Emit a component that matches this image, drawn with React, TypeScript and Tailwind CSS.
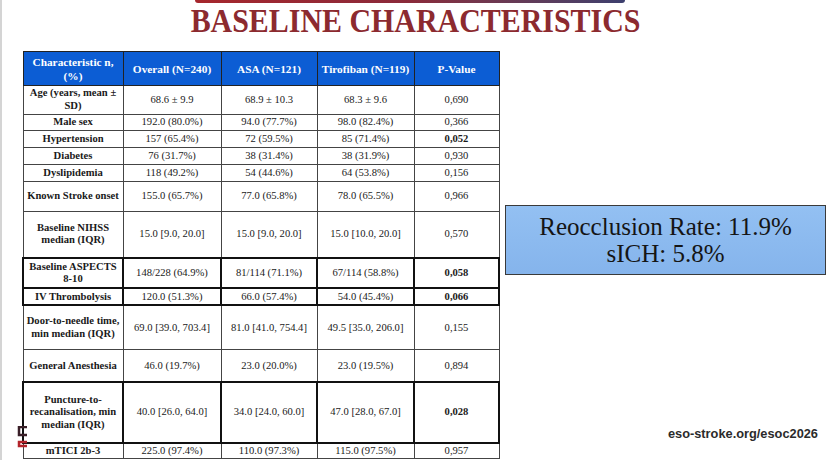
type Row = {
  label: string[];
  overall: string;
  asa: string;
  tiro: string;
  p: string;
  h: string;
  thick?: boolean;
  boldP?: boolean;
};

const rows: Row[] = [
  { label: ["Age (years, mean ±", "SD)"], overall: "68.6 ± 9.9", asa: "68.9 ± 10.3", tiro: "68.3 ± 9.6", p: "0,690", h: "h-[27px]" },
  { label: ["Male sex"], overall: "192.0 (80.0%)", asa: "94.0 (77.7%)", tiro: "98.0 (82.4%)", p: "0,366", h: "h-[16px]" },
  { label: ["Hypertension"], overall: "157 (65.4%)", asa: "72 (59.5%)", tiro: "85 (71.4%)", p: "0,052", h: "h-[16px]", boldP: true },
  { label: ["Diabetes"], overall: "76 (31.7%)", asa: "38 (31.4%)", tiro: "38 (31.9%)", p: "0,930", h: "h-[16px]" },
  { label: ["Dyslipidemia"], overall: "118 (49.2%)", asa: "54 (44.6%)", tiro: "64 (53.8%)", p: "0,156", h: "h-[16px]" },
  { label: ["Known Stroke onset"], overall: "155.0 (65.7%)", asa: "77.0 (65.8%)", tiro: "78.0 (65.5%)", p: "0,966", h: "h-[28px]" },
  { label: ["Baseline NIHSS", "median (IQR)"], overall: "15.0 [9.0, 20.0]", asa: "15.0 [9.0, 20.0]", tiro: "15.0 [10.0, 20.0]", p: "0,570", h: "h-[44px]" },
  { label: ["Baseline ASPECTS", "8-10"], overall: "148/228 (64.9%)", asa: "81/114 (71.1%)", tiro: "67/114 (58.8%)", p: "0,058", h: "h-[29px]", thick: true, boldP: true },
  { label: ["IV Thrombolysis"], overall: "120.0 (51.3%)", asa: "66.0 (57.4%)", tiro: "54.0 (45.4%)", p: "0,066", h: "h-[16px]", thick: true, boldP: true },
  { label: ["Door-to-needle time,", "min median (IQR)"], overall: "69.0 [39.0, 703.4]", asa: "81.0 [41.0, 754.4]", tiro: "49.5 [35.0, 206.0]", p: "0,155", h: "h-[42px]" },
  { label: ["General Anesthesia"], overall: "46.0 (19.7%)", asa: "23.0 (20.0%)", tiro: "23.0 (19.5%)", p: "0,894", h: "h-[31px]" },
  { label: ["Puncture-to-", "recanalisation, min", "median (IQR)"], overall: "40.0 [26.0, 64.0]", asa: "34.0 [24.0, 60.0]", tiro: "47.0 [28.0, 67.0]", p: "0,028", h: "h-[57px]", thick: true, boldP: true },
  { label: ["mTICI 2b-3"], overall: "225.0 (97.4%)", asa: "110.0 (97.3%)", tiro: "115.0 (97.5%)", p: "0,957", h: "h-[15px]" },
];

const serif = "font-['Liberation_Serif','Times_New_Roman',serif]";

export default function App() {
  return (
    <div className={`relative w-[830px] h-[460px] overflow-hidden bg-white border-l-2 border-[#d4d4d4] ${serif}`}>
      {/* cut-off logo on the slide edge */}
      <svg className="absolute left-[14px] top-[426px]" width="14" height="22" viewBox="0 0 14 22">
        <path d="M11 1 H3 V9 H11" fill="none" stroke="#3a1f28" strokeWidth="2.5" />
        <path d="M11 16 H3 V20 H11" fill="none" stroke="#b3242b" strokeWidth="2.5" />
      </svg>

      <div className="flex justify-center">
        <div className="ml-[-12px] w-[430px] h-[3px] rounded-b-full bg-gradient-to-r from-[#a6262c] via-[#8a2a3a] to-[#3c3f6e]" />
      </div>

      <h1 className="mt-[-2px] h-[40px] flex justify-center text-[34px] leading-[40px] font-bold text-[#8c2a2f]">
        <span className="inline-block scale-x-[0.88]">BASELINE CHARACTERISTICS</span>
      </h1>

      <div className="flex mt-[10px] h-[408px]">
        <table className={`ml-[20px] border-collapse table-fixed w-[476px] text-center text-[10.6px] leading-[12px] text-[#1a1a1a] ${serif}`}>
          <colgroup>
            <col className="w-[100px]" />
            <col className="w-[98px]" />
            <col className="w-[96px]" />
            <col className="w-[97px]" />
            <col className="w-[85px]" />
          </colgroup>
          <thead>
            <tr className={`h-[34px] bg-[#0c5dd4] text-white font-bold text-[11.3px] leading-[14px] ${serif}`}>
              <th className="border border-[#222] px-0">Characteristic n,<br />(%)</th>
              <th className="border border-[#222] px-0 whitespace-nowrap">Overall (N=240)</th>
              <th className="border border-[#222] px-0 whitespace-nowrap">ASA (N=121)</th>
              <th className="border border-[#222] px-0 whitespace-nowrap">Tirofiban (N=119)</th>
              <th className="border border-[#222] px-0">P-Value</th>
            </tr>
          </thead>
          <tbody className={serif}>
            {rows.map((r) => {
              const b = r.thick ? "border-2 border-[#111]" : "border border-[#444]";
              return (
                <tr key={r.label.join(" ")} className={r.h}>
                  <td className={`${b} px-0.5 py-0 font-bold text-[10.6px] leading-[12.5px]`}>
                    {r.label.map((l, i) => (
                      <div key={i}>{l}</div>
                    ))}
                  </td>
                  <td className={`${b} px-1 py-0`}>{r.overall}</td>
                  <td className={`${b} px-1 py-0`}>{r.asa}</td>
                  <td className={`${b} px-1 py-0`}>{r.tiro}</td>
                  <td className={`${b} px-1 py-0 ${r.boldP ? "font-bold" : ""}`}>{r.p}</td>
                </tr>
              );
            })}
          </tbody>
        </table>

        <div className="flex flex-col flex-1 ml-[5px] mr-[5px]">
          <div className="mt-[154px] h-[70px] w-[321px] border border-[#3a3a3a] bg-gradient-to-b from-[#93c0f2] to-[#85b4ec] flex flex-col items-center justify-center text-[25px] leading-[27px] text-[#151515]">
            <div>Reocclusion Rate: 11.9%</div>
            <div>sICH: 5.8%</div>
          </div>
          <div className="mt-auto mb-[16px] self-end mr-[8px] font-['Liberation_Sans',Arial,sans-serif] text-[12.8px] font-semibold text-[#2b2b2b]">
            eso-stroke.org/esoc2026
          </div>
        </div>
      </div>
    </div>
  );
}
